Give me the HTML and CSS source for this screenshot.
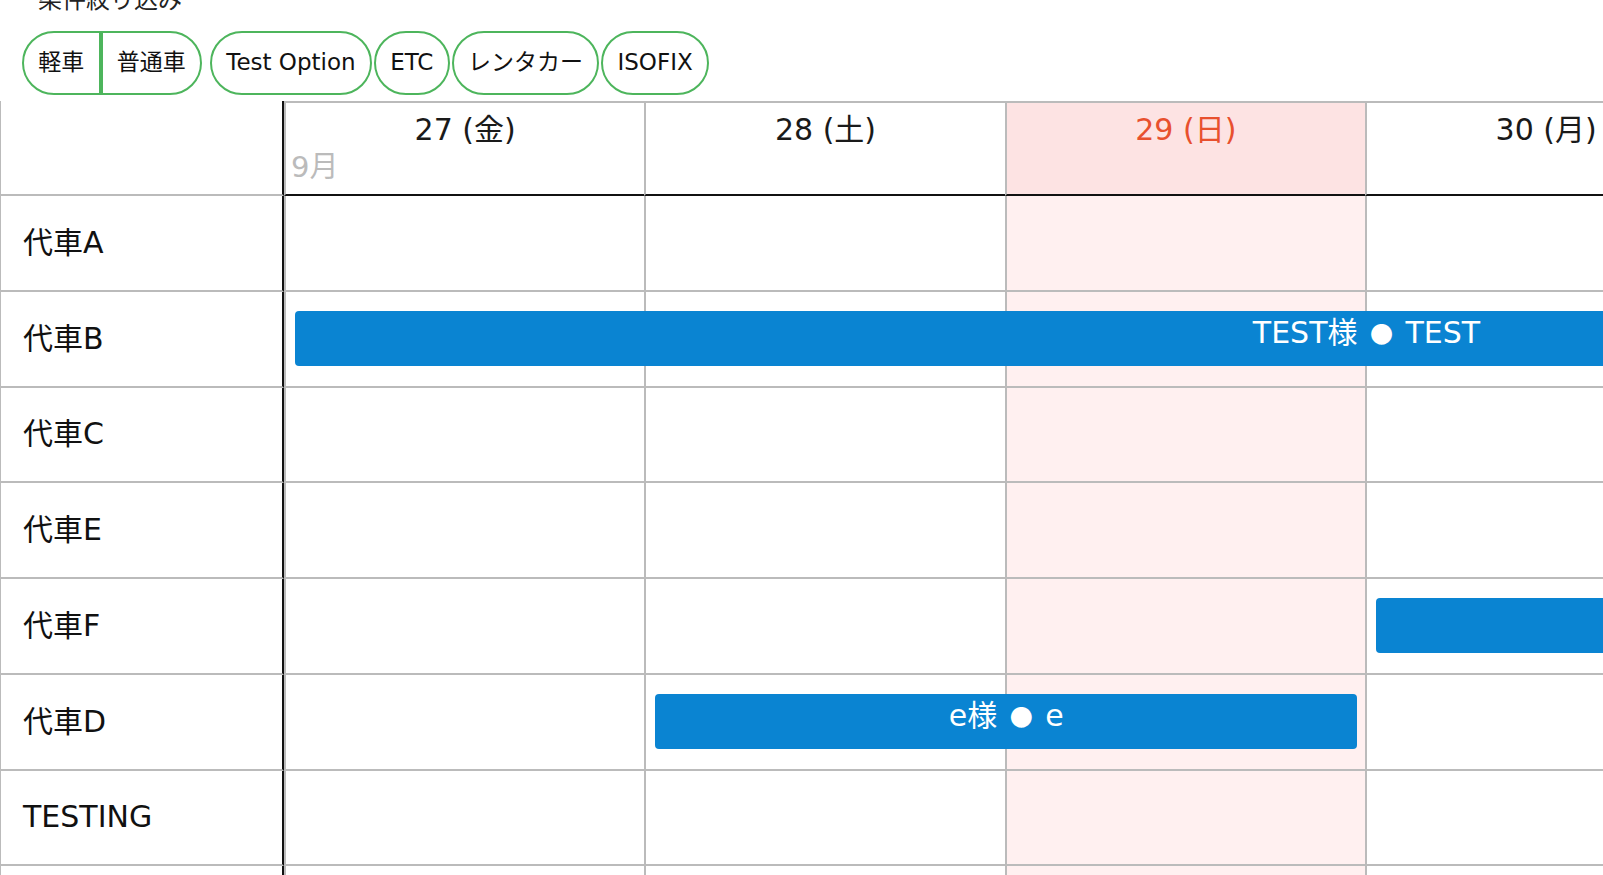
FILE: index.html
```html
<!DOCTYPE html>
<html lang="ja">
<head>
<meta charset="utf-8">
<title>代車スケジュール</title>
<link rel="stylesheet" href="styles.css">
</head>
<body>
<div class="page">
  <div class="filter-label">条件絞り込み</div>
  <div class="chips">
    <div class="chip-group">
      <span class="chip chip-left">軽車</span>
      <span class="chip chip-right">普通車</span>
    </div>
    <span class="chip">Test Option</span>
    <span class="chip">ETC</span>
    <span class="chip">レンタカー</span>
    <span class="chip">ISOFIX</span>
  </div>

  <div class="table">
    <div class="corner"></div>
    <div class="day-head"><div class="date">27 (金)</div><div class="month">9月</div></div>
    <div class="day-head"><div class="date">28 (土)</div></div>
    <div class="day-head sun"><div class="date">29 (日)</div></div>
    <div class="day-head"><div class="date">30 (月)</div></div>
    <div class="day-head"><div class="date">1 (火)</div><div class="month">10月</div></div>
    <div class="day-head"><div class="date">2 (水)</div></div>

    <div class="label">代車A</div>
    <div class="cell"></div><div class="cell"></div><div class="cell sun"></div><div class="cell"></div><div class="cell"></div><div class="cell"></div>

    <div class="label">代車B</div>
    <div class="cell has-bar"><div class="bar" style="width:2143px">TEST様 <span class="dot">●</span> TEST</div></div>
    <div class="cell"></div><div class="cell sun"></div><div class="cell"></div><div class="cell"></div><div class="cell"></div>

    <div class="label">代車C</div>
    <div class="cell"></div><div class="cell"></div><div class="cell sun"></div><div class="cell"></div><div class="cell"></div><div class="cell"></div>

    <div class="label">代車E</div>
    <div class="cell"></div><div class="cell"></div><div class="cell sun"></div><div class="cell"></div><div class="cell"></div><div class="cell"></div>

    <div class="label">代車F</div>
    <div class="cell"></div><div class="cell"></div><div class="cell sun"></div>
    <div class="cell has-bar"><div class="bar" style="width:1062px">F様 <span class="dot">●</span> F</div></div>
    <div class="cell"></div><div class="cell"></div>

    <div class="label">代車D</div>
    <div class="cell"></div>
    <div class="cell has-bar"><div class="bar" style="width:702px">e様 <span class="dot">●</span> e</div></div>
    <div class="cell sun"></div><div class="cell"></div><div class="cell"></div><div class="cell"></div>

    <div class="label">TESTING</div>
    <div class="cell"></div><div class="cell"></div><div class="cell sun"></div><div class="cell"></div><div class="cell"></div><div class="cell"></div>

    <div class="label">代車G</div>
    <div class="cell"></div><div class="cell"></div><div class="cell sun"></div><div class="cell"></div><div class="cell"></div><div class="cell"></div>
  </div>
</div>
</body>
</html>
```

FILE: styles.css
```css
html, body {
  margin: 0;
  padding: 0;
  overflow: hidden;
  background: #fff;
}

body {
  width: 1603px;
  height: 875px;
  font-family: "DejaVu Sans", "Noto Sans CJK JP", sans-serif;
  color: #111;
}

.page {
  margin-top: -17px;
}

.filter-label {
  font-size: 24px;
  line-height: 34px;
  padding-left: 38px;
  color: #222;
}

.chips {
  display: flex;
  gap: 2px;
  padding-left: 22px;
  margin-top: 14px;
}

.chip-group {
  display: flex;
  margin-right: 6px;
}

.chip {
  height: 64px;
  box-sizing: border-box;
  border: 2px solid #4db55c;
  border-radius: 32px;
  padding: 0 14.25px 3px;
  display: flex;
  align-items: center;
  font-size: 23px;
  line-height: 30px;
  white-space: nowrap;
  color: #111;
}

.chip-left {
  border-radius: 32px 0 0 32px;
}

.chip-right {
  border-radius: 0 32px 32px 0;
}

.table {
  margin-top: 6px;
  display: grid;
  grid-template-columns: 284px repeat(6, 360.33px);
  grid-template-rows: 95px;
  grid-auto-rows: 95.75px;
  width: max-content;
}

.corner {
  border-left: 1px solid #bbb;
  border-right: 2px solid #111;
  border-bottom: 2px solid #bbb;
}

.day-head {
  border-top: 2px solid #bbb;
  border-left: 2px solid #bbb;
  border-bottom: 2px solid #111;
}

.date {
  text-align: center;
  font-size: 30px;
  line-height: 40px;
  padding-top: 7px;
  color: #1a1a1a;
}

.month {
  font-size: 29px;
  line-height: 28px;
  margin-top: 3px;
  padding-left: 5px;
  color: #bbb;
}

.day-head.sun {
  background: #fde3e3;
}

.day-head.sun .date {
  color: #e8502e;
}

.label {
  border-left: 1px solid #bbb;
  border-right: 2px solid #111;
  border-bottom: 2px solid #bbb;
  display: flex;
  align-items: center;
  padding-left: 22px;
  font-size: 30px;
  line-height: 40px;
  color: #111;
}

.cell {
  border-left: 2px solid #bbb;
  border-bottom: 2px solid #bbb;
}

.cell.sun {
  background: #fff0f0;
}

.cell.has-bar {
  position: relative;
}

.bar {
  position: absolute;
  top: 19px;
  left: 9px;
  height: 55px;
  box-sizing: border-box;
  padding-top: 2px;
  background: #0a84d2;
  border-radius: 4px;
  color: #fff;
  text-align: center;
  font-size: 30px;
  line-height: 40px;
  white-space: nowrap;
  z-index: 1;
}

.dot {
  font-family: "Noto Sans CJK JP", sans-serif;
  font-size: 23px;
  line-height: 1;
  margin: 0 3px;
}
```
